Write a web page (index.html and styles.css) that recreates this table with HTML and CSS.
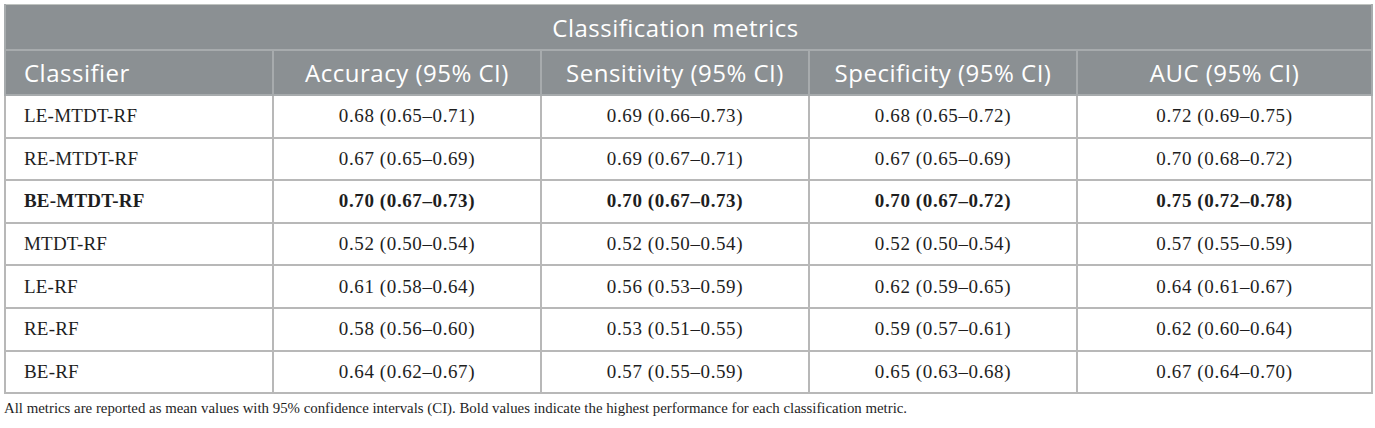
FILE: index.html
```html
<!DOCTYPE html>
<html>
<head>
<meta charset="utf-8">
<link rel="stylesheet" href="styles.css">
</head>
<body>
<div class="wrap">
<table class="metrics">
  <colgroup>
    <col class="c1"><col class="c2"><col class="c3"><col class="c4"><col class="c5">
  </colgroup>
  <thead>
    <tr class="title-row"><th colspan="5" class="title">Classification metrics</th></tr>
    <tr class="head-row">
      <th class="left">Classifier</th>
      <th>Accuracy (95% CI)</th>
      <th>Sensitivity (95% CI)</th>
      <th>Specificity (95% CI)</th>
      <th>AUC (95% CI)</th>
    </tr>
  </thead>
  <tbody>
    <tr><td class="left">LE-MTDT-RF</td><td>0.68 (0.65–0.71)</td><td>0.69 (0.66–0.73)</td><td>0.68 (0.65–0.72)</td><td>0.72 (0.69–0.75)</td></tr>
    <tr><td class="left">RE-MTDT-RF</td><td>0.67 (0.65–0.69)</td><td>0.69 (0.67–0.71)</td><td>0.67 (0.65–0.69)</td><td>0.70 (0.68–0.72)</td></tr>
    <tr class="best"><td class="left">BE-MTDT-RF</td><td>0.70 (0.67–0.73)</td><td>0.70 (0.67–0.73)</td><td>0.70 (0.67–0.72)</td><td>0.75 (0.72–0.78)</td></tr>
    <tr><td class="left">MTDT-RF</td><td>0.52 (0.50–0.54)</td><td>0.52 (0.50–0.54)</td><td>0.52 (0.50–0.54)</td><td>0.57 (0.55–0.59)</td></tr>
    <tr><td class="left">LE-RF</td><td>0.61 (0.58–0.64)</td><td>0.56 (0.53–0.59)</td><td>0.62 (0.59–0.65)</td><td>0.64 (0.61–0.67)</td></tr>
    <tr><td class="left">RE-RF</td><td>0.58 (0.56–0.60)</td><td>0.53 (0.51–0.55)</td><td>0.59 (0.57–0.61)</td><td>0.62 (0.60–0.64)</td></tr>
    <tr><td class="left">BE-RF</td><td>0.64 (0.62–0.67)</td><td>0.57 (0.55–0.59)</td><td>0.65 (0.63–0.68)</td><td>0.67 (0.64–0.70)</td></tr>
  </tbody>
</table>
<p class="note">All metrics are reported as mean values with 95% confidence intervals (CI). Bold values indicate the highest performance for each classification metric.</p>
</div>
</body>
</html>
```
FILE: styles.css
```css
html, body {
  margin: 0;
  padding: 0;
  background: #ffffff;
}
.wrap {
  padding: 4px 4px 0 4px;
}
.metrics {
  width: 1367px;
  border-collapse: collapse;
  table-layout: fixed;
  border: 1px solid #bfc3c0;
}
.c1, .c2, .c3, .c4 { width: 268px; }
.c5 { width: 295px; }
.metrics th {
  background: #8b9093;
  color: #ffffff;
  font-family: "Open Sans", "Lato", sans-serif;
  font-weight: 400;
  font-size: 24px;
  letter-spacing: 0.5px;
  text-align: center;
  border: 2px solid #a7abad;
  padding: 0 18px;
}
.metrics th.left {
  text-align: left;
}
.metrics .title-row th {
  height: 44px;
  border-top: none;
  padding-right: 44px;
}
.metrics .head-row th {
  height: 43px;
}
.metrics td {
  font-family: "Liberation Serif", "Times New Roman", serif;
  font-size: 19px;
  letter-spacing: 0.6px;
  color: #1e1e1e;
  text-align: center;
  border: 2px solid #b8b8b8;
  height: 40.6px;
  padding: 0 18px;
}
.metrics td.left {
  text-align: left;
  letter-spacing: 0.2px;
}
.metrics .best td {
  font-weight: 700;
}
.note {
  margin: 6px 0 0 0;
  font-family: "Liberation Serif", "Times New Roman", serif;
  font-size: 14.85px;
  color: #1e1e1e;
}
```
